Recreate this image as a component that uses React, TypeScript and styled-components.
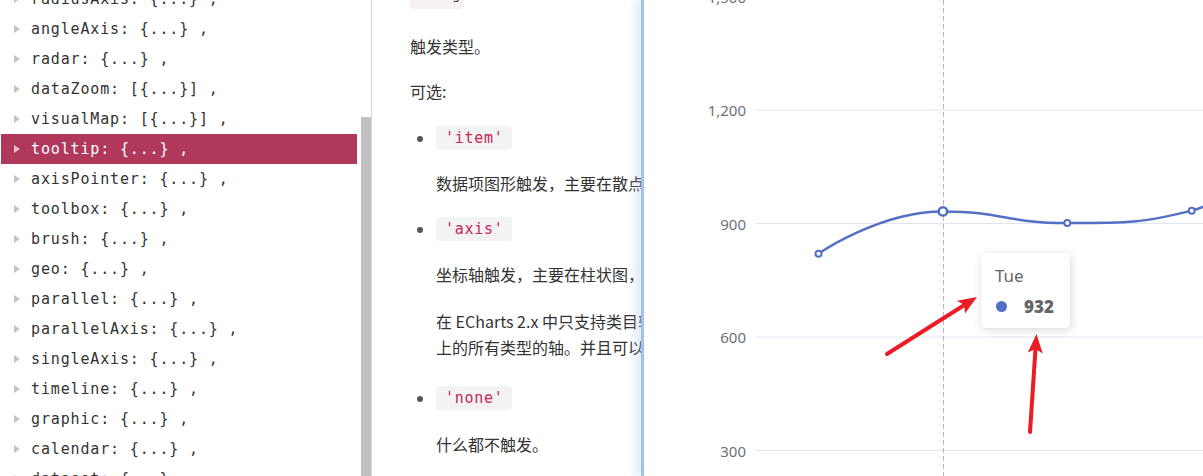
import React from "react";
import styled, { createGlobalStyle } from "styled-components";

const Global = createGlobalStyle`
  html, body { margin: 0; padding: 0; background: #fff; overflow: hidden; }
  body { font-family: "Noto Sans", "Noto Sans CJK SC", sans-serif; }
  * { box-sizing: border-box; }
`;

const Page = styled.div`
  display: flex;
  width: 1203px;
  height: 476px;
  overflow: hidden;
  background: #fff;
`;

/* ---------- left tree ---------- */
const LeftPanel = styled.div`
  flex: none;
  width: 372px;
  height: 476px;
  display: flex;
  border-right: 1px solid #dadada;
  overflow: hidden;
`;

const List = styled.ul`
  list-style: none;
  margin: -16px 0 0 0;
  padding: 0 0 0 1px;
  width: 357px;
  flex: none;
`;

const Row = styled.li<{ $active?: boolean }>`
  height: 30px;
  display: flex;
  align-items: center;
  gap: 11px;
  padding-left: 13px;
  background: ${(p) => (p.$active ? "#b0395b" : "transparent")};
  color: ${(p) => (p.$active ? "#ffffff" : "#333333")};
  font-family: "DejaVu Sans Mono", "Liberation Mono", monospace;
  font-size: 15px;
  letter-spacing: 0.85px;
  white-space: pre;
`;

const Caret = styled.span<{ $active?: boolean }>`
  flex: none;
  width: 0;
  height: 0;
  border-top: 4px solid transparent;
  border-bottom: 4px solid transparent;
  border-left: 6px solid ${(p) => (p.$active ? "#e3bfca" : "#c4c4c4")};
`;

const ScrollTrack = styled.div`
  flex: none;
  width: 10px;
  margin-left: 4px;
  display: flex;
  flex-direction: column;
`;

const ScrollThumb = styled.div`
  margin-top: 117px;
  flex: 1;
  background: #c1c1c1;
`;

/* ---------- middle doc ---------- */
const DocPanel = styled.div`
  flex: none;
  width: 269px;
  height: 476px;
  overflow: hidden;
`;

const DocContent = styled.div`
  margin-top: -15px;
  padding-left: 38px;
  width: 900px;
  color: #333;
  font-family: "Noto Sans CJK SC", "Noto Sans", sans-serif;
  font-size: 16px;
  line-height: 26px;
`;

const Line = styled.div<{ $mt?: number }>`
  margin-top: ${(p) => p.$mt ?? 0}px;
  height: 26px;
  white-space: nowrap;
`;

const Code = styled.code<{ $type?: boolean }>`
  display: inline-block;
  height: 24px;
  margin-top: ${(p) => (p.$type ? "0" : "1px")};
  line-height: ${(p) => (p.$type ? "20px" : "24px")};
  vertical-align: top;
  border-radius: 4px;
  padding: ${(p) => (p.$type ? "0 3px" : "0 9px")};
  background: ${(p) => (p.$type ? "#f7f1f1" : "#f3f3f3")};
  color: ${(p) => (p.$type ? "#333" : "#c9265a")};
  font-family: "DejaVu Sans Mono", "Liberation Mono", monospace;
  font-size: ${(p) => (p.$type ? "13px" : "15px")};
  letter-spacing: ${(p) => (p.$type ? "0" : "0.7px")};
`;

const Options = styled.ul`
  margin: 21px 0 0 0;
  padding: 0 0 0 26px;
  list-style: disc;
`;

const Option = styled.li<{ $mt?: number }>`
  margin-top: ${(p) => p.$mt ?? 20}px;
  color: #333;
  &::marker { color: #555; }
`;

const PillLine = styled.div`
  height: 26px;
  line-height: 26px;
`;

const Desc = styled.p<{ $mt?: number }>`
  margin: ${(p) => p.$mt ?? 19}px 0 0 0;
  white-space: nowrap;
`;

/* ---------- chart ---------- */
const ChartPanel = styled.div`
  flex: 1;
  position: relative;
  z-index: 1;
  height: 476px;
  background: #fff;
  border-left: 3px solid #a3c1ea;
  box-shadow: -6px 0 9px rgba(170, 195, 235, 0.35);
`;

const ChartSvg = styled.svg`
  display: block;
  width: 559px;
  height: 476px;
`;

const Tooltip = styled.div`
  position: absolute;
  left: 337px;
  top: 253px;
  width: 89px;
  height: 75px;
  padding: 12px 14px 0 14px;
  background: #fff;
  border-radius: 5px;
  box-shadow: 1px 2px 10px rgba(0, 0, 0, 0.16);
  font-family: "Noto Sans", sans-serif;
  color: #666;
`;

const TipTitle = styled.div`
  font-size: 17px;
  line-height: 22px;
`;

const TipRow = styled.div`
  margin-top: 8px;
  display: flex;
  align-items: center;
  height: 22px;
`;

const TipDot = styled.span`
  width: 11px;
  height: 11px;
  border-radius: 50%;
  background: #5470c6;
  margin-left: 1px;
`;

const TipValue = styled.span`
  margin-left: 17px;
  font-size: 17px;
  font-weight: 900;
  color: #666;
`;

const rows: [string, string][] = [
  ["radiusAxis", "{...}"],
  ["angleAxis", "{...}"],
  ["radar", "{...}"],
  ["dataZoom", "[{...}]"],
  ["visualMap", "[{...}]"],
  ["tooltip", "{...}"],
  ["axisPointer", "{...}"],
  ["toolbox", "{...}"],
  ["brush", "{...}"],
  ["geo", "{...}"],
  ["parallel", "{...}"],
  ["parallelAxis", "{...}"],
  ["singleAxis", "{...}"],
  ["timeline", "{...}"],
  ["graphic", "{...}"],
  ["calendar", "{...}"],
  ["dataset", "{...}"],
];

const data = [820, 932, 901, 934, 1290, 1330, 1320];
const yOf = (v: number) => 110 + ((1200 - v) * 113.5) / 300;
const pts = data.map((v, i) => [818.5 + i * 124.4, yOf(v)] as [number, number]);

/* echarts-style smoothed polyline with extreme constraints */
function smoothPath(p: [number, number][], smooth = 0.5) {
  const mn = Math.min;
  const mx = Math.max;
  let d = "";
  let cpx0 = 0, cpy0 = 0, prevX = 0, prevY = 0;
  for (let k = 0; k < p.length; k++) {
    const [x, y] = p[k];
    if (k === 0) {
      d = `M${x},${y}`;
      cpx0 = x;
      cpy0 = y;
    } else {
      let cpx1: number, cpy1: number;
      let nextCpx0 = x, nextCpy0 = y;
      if (k === p.length - 1) {
        cpx1 = x;
        cpy1 = y;
      } else {
        const [nextX, nextY] = p[k + 1];
        let vx = nextX - prevX;
        let vy = nextY - prevY;
        const lenPrev = Math.hypot(x - prevX, y - prevY);
        const lenNext = Math.hypot(nextX - x, nextY - y);
        const r = lenNext / (lenNext + lenPrev);
        nextCpx0 = x + vx * smooth * r;
        nextCpy0 = y + vy * smooth * r;
        nextCpx0 = mx(mn(nextCpx0, mx(nextX, x)), mn(nextX, x));
        nextCpy0 = mx(mn(nextCpy0, mx(nextY, y)), mn(nextY, y));
        vx = nextCpx0 - x;
        vy = nextCpy0 - y;
        cpx1 = x - (vx * lenPrev) / lenNext;
        cpy1 = y - (vy * lenPrev) / lenNext;
        cpx1 = mx(mn(cpx1, mx(prevX, x)), mn(prevX, x));
        cpy1 = mx(mn(cpy1, mx(prevY, y)), mn(prevY, y));
        vx = x - cpx1;
        vy = y - cpy1;
        nextCpx0 = x + (vx * lenNext) / lenPrev;
        nextCpy0 = y + (vy * lenNext) / lenPrev;
      }
      d += ` C${cpx0},${cpy0} ${cpx1},${cpy1} ${x},${y}`;
      cpx0 = nextCpx0;
      cpy0 = nextCpy0;
    }
    prevX = x;
    prevY = y;
  }
  return d;
}

function Arrow({ tail, tip }: { tail: [number, number]; tip: [number, number] }) {
  const dx = tip[0] - tail[0];
  const dy = tip[1] - tail[1];
  const len = Math.hypot(dx, dy);
  const ux = dx / len;
  const uy = dy / len;
  const nx = -uy;
  const ny = ux;
  const head = 19;
  const half = 7.5;
  const bx = tip[0] - ux * head;
  const by = tip[1] - uy * head;
  const poly = [
    [tip[0], tip[1]],
    [bx + nx * half, by + ny * half],
    [bx + ux * 4, by + uy * 4],
    [bx - nx * half, by - ny * half],
  ]
    .map((q) => q.join(","))
    .join(" ");
  return (
    <g>
      <line x1={tail[0]} y1={tail[1]} x2={bx + ux * 5} y2={by + uy * 5} stroke="#ea1c25" strokeWidth={4} strokeLinecap="round" />
      <polygon points={poly} fill="#ea1c25" />
    </g>
  );
}

const gridYs = [-3.5, 110, 223.5, 337, 450.5];
const labels = ["1,500", "1,200", "900", "600", "300"];

export default function App() {
  return (
    <Page>
      <Global />
      <LeftPanel>
        <List>
          {rows.map(([k, v]) => {
            const active = k === "tooltip";
            return (
              <Row key={k} $active={active}>
                <Caret $active={active} />
                <span>{`${k}: ${v} ,`}</span>
              </Row>
            );
          })}
        </List>
        <ScrollTrack>
          <ScrollThumb />
        </ScrollTrack>
      </LeftPanel>

      <DocPanel>
        <DocContent>
          <Line>
            <Code $type>string</Code>
          </Line>
          <Line $mt={22}>触发类型。</Line>
          <Line $mt={19}>可选:</Line>
          <Options>
            <Option $mt={0}>
              <PillLine>
                <Code>'item'</Code>
              </PillLine>
              <Desc>数据项图形触发，主要在散点图，饼图等无类目轴的图表中使用。</Desc>
            </Option>
            <Option $mt={20}>
              <PillLine>
                <Code>'axis'</Code>
              </PillLine>
              <Desc $mt={19}>坐标轴触发，主要在柱状图，折线图等会使用类目轴的图表中使用。</Desc>
              <Desc $mt={21}>
                在 ECharts 2.x 中只支持类目轴上使用 axis trigger，在 ECharts 3 中支持在直角坐标系和极坐标系
                <br />
                上的所有类型的轴。并且可以通过 axisPointer.axis 指定坐标轴。
              </Desc>
            </Option>
            <Option $mt={25}>
              <PillLine>
                <Code>'none'</Code>
              </PillLine>
              <Desc $mt={20}>什么都不触发。</Desc>
            </Option>
          </Options>
        </DocContent>
      </DocPanel>

      <ChartPanel>
        <ChartSvg viewBox="644 0 559 476">
          {gridYs.map((y, i) => (
            <g key={i}>
              <line x1={756} x2={1203} y1={y} y2={y} stroke="#e0e6f1" strokeWidth={1} />
              <text
                x={746}
                y={y}
                textAnchor="end"
                dominantBaseline="central"
                fontFamily="Noto Sans, sans-serif"
                fontSize={15}
                fill="#6e7079"
              >
                {labels[i]}
              </text>
            </g>
          ))}
          <line x1={943.5} x2={943.5} y1={0} y2={476} stroke="#b3b6c6" strokeWidth={1} strokeDasharray="5 3" />
          <path d={smoothPath(pts)} fill="none" stroke="#5470c6" strokeWidth={2.5} />
          {pts.map(([x, y], i) => (
            <circle
              key={i}
              cx={x}
              cy={y}
              r={i === 1 ? 4.2 : 3}
              fill="#fff"
              stroke="#5470c6"
              strokeWidth={i === 1 ? 2.5 : 2}
            />
          ))}
          <Arrow tail={[887, 354]} tip={[977, 297]} />
          <Arrow tail={[1030, 432]} tip={[1036.5, 334]} />
        </ChartSvg>
        <Tooltip>
          <TipTitle>Tue</TipTitle>
          <TipRow>
            <TipDot />
            <TipValue>932</TipValue>
          </TipRow>
        </Tooltip>
      </ChartPanel>
    </Page>
  );
}
